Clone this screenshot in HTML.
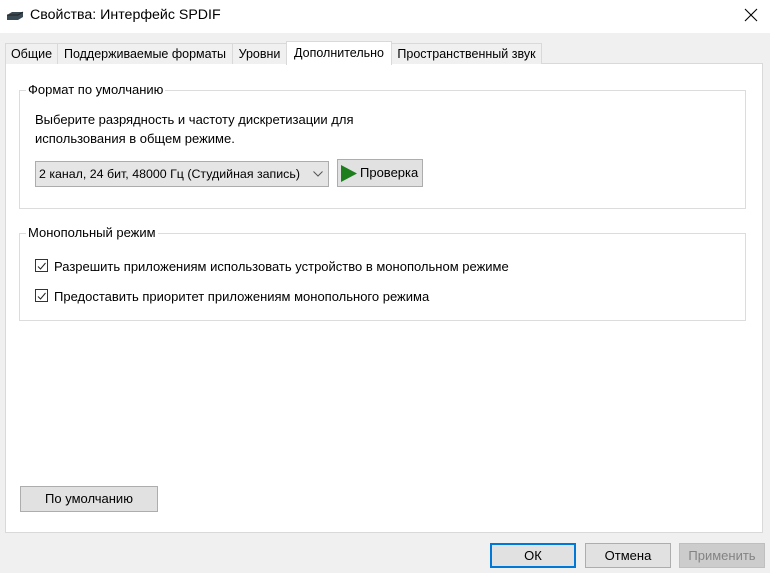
<!DOCTYPE html><html><head><style>
body{margin:0;width:770px;height:573px;background:#f0f0f0;font-family:"Liberation Sans",sans-serif;font-size:13px;color:#000;position:relative;overflow:hidden}
.a{position:absolute;white-space:nowrap}
.tab{position:absolute;top:43px;height:21px;border:1px solid #d9d9d9;border-bottom:none;background:#f0f0f0;box-sizing:border-box;line-height:20px;text-align:center;font-size:12.5px}
.btn{position:absolute;border:1px solid #adadad;background:#e1e1e1;box-sizing:border-box;text-align:center}
.grp{position:absolute;border:1px solid #dcdcdc;box-sizing:border-box}
.lbl{position:absolute;background:#fff;padding:0 2px;top:-9px;left:6px}
.cb{position:absolute;width:13px;height:13px;border:1px solid #333;box-sizing:border-box;background:#fff}
</style></head><body>
<div class="a" style="left:0;top:0;width:770px;height:33px;background:#fff"></div>
<svg class="a" style="left:6px;top:11px" width="18" height="10"><path d="M1 4 L6 1 L17 1 L17 6 L12 9 L1 9Z" fill="#3a4a55"/><path d="M1 4 L12 4 L17 1" stroke="#222" fill="none"/></svg>
<div class="a" style="left:30px;top:7px;font-size:14.2px">Свойства: Интерфейс SPDIF</div>
<svg class="a" style="left:744px;top:8px" width="14" height="14"><path d="M1 1L13 13M13 1L1 13" stroke="#000" stroke-width="1.1"/></svg>
<div class="a" style="left:5px;top:63px;width:758px;height:470px;background:#fff;border:1px solid #d9d9d9;box-sizing:border-box"></div>
<div class="tab" style="left:5px;width:53px">Общие</div>
<div class="tab" style="left:57px;width:176px">Поддерживаемые форматы</div>
<div class="tab" style="left:232px;width:55px">Уровни</div>
<div class="tab" style="left:391px;width:151px">Пространственный звук</div>
<div class="tab" style="left:286px;top:41px;height:24px;width:106px;background:#fff;line-height:22px">Дополнительно</div>
<div class="grp" style="left:19px;top:90px;width:727px;height:119px"><div class="lbl">Формат по умолчанию</div></div>
<div class="a" style="left:35px;top:110px;line-height:19px">Выберите разрядность и частоту дискретизации для<br>использования в общем режиме.</div>
<div class="btn" style="left:35px;top:161px;width:294px;height:26px;border-color:#acacac;background:#e5e5e5;text-align:left;padding-left:3px;line-height:24px;font-size:12.4px">2 канал, 24 бит, 48000 Гц (Студийная запись)<svg class="a" style="left:277px;top:9px" width="10" height="6"><path d="M0.5 0.5L5 5L9.5 0.5" stroke="#555" fill="none"/></svg></div>
<div class="btn" style="left:337px;top:159px;width:86px;height:28px;line-height:26px;text-align:left;padding-left:22px">Проверка<svg class="a" style="left:3px;top:5px" width="16" height="17"><path d="M0 0L16 8.5L0 17Z" fill="#1e7e1e"/></svg></div>
<div class="grp" style="left:19px;top:233px;width:727px;height:88px"><div class="lbl">Монопольный режим</div></div>
<div class="cb" style="left:35px;top:259px"><svg width="11" height="11"><path d="M2 5.5L4.5 8L9.5 2" stroke="#222" fill="none"/></svg></div>
<div class="a" style="left:54px;top:259px">Разрешить приложениям использовать устройство в монопольном режиме</div>
<div class="cb" style="left:35px;top:289px"><svg width="11" height="11"><path d="M2 5.5L4.5 8L9.5 2" stroke="#222" fill="none"/></svg></div>
<div class="a" style="left:54px;top:289px">Предоставить приоритет приложениям монопольного режима</div>
<div class="btn" style="left:20px;top:486px;width:138px;height:26px;line-height:24px">По умолчанию</div>
<div class="btn" style="left:490px;top:543px;width:86px;height:25px;line-height:21px;border:2px solid #0078d7">ОК</div>
<div class="btn" style="left:585px;top:543px;width:86px;height:25px;line-height:23px">Отмена</div>
<div class="btn" style="left:679px;top:543px;width:86px;height:25px;line-height:23px;background:#ccc;border-color:#bfbfbf;color:#838383">Применить</div>
</body></html>
